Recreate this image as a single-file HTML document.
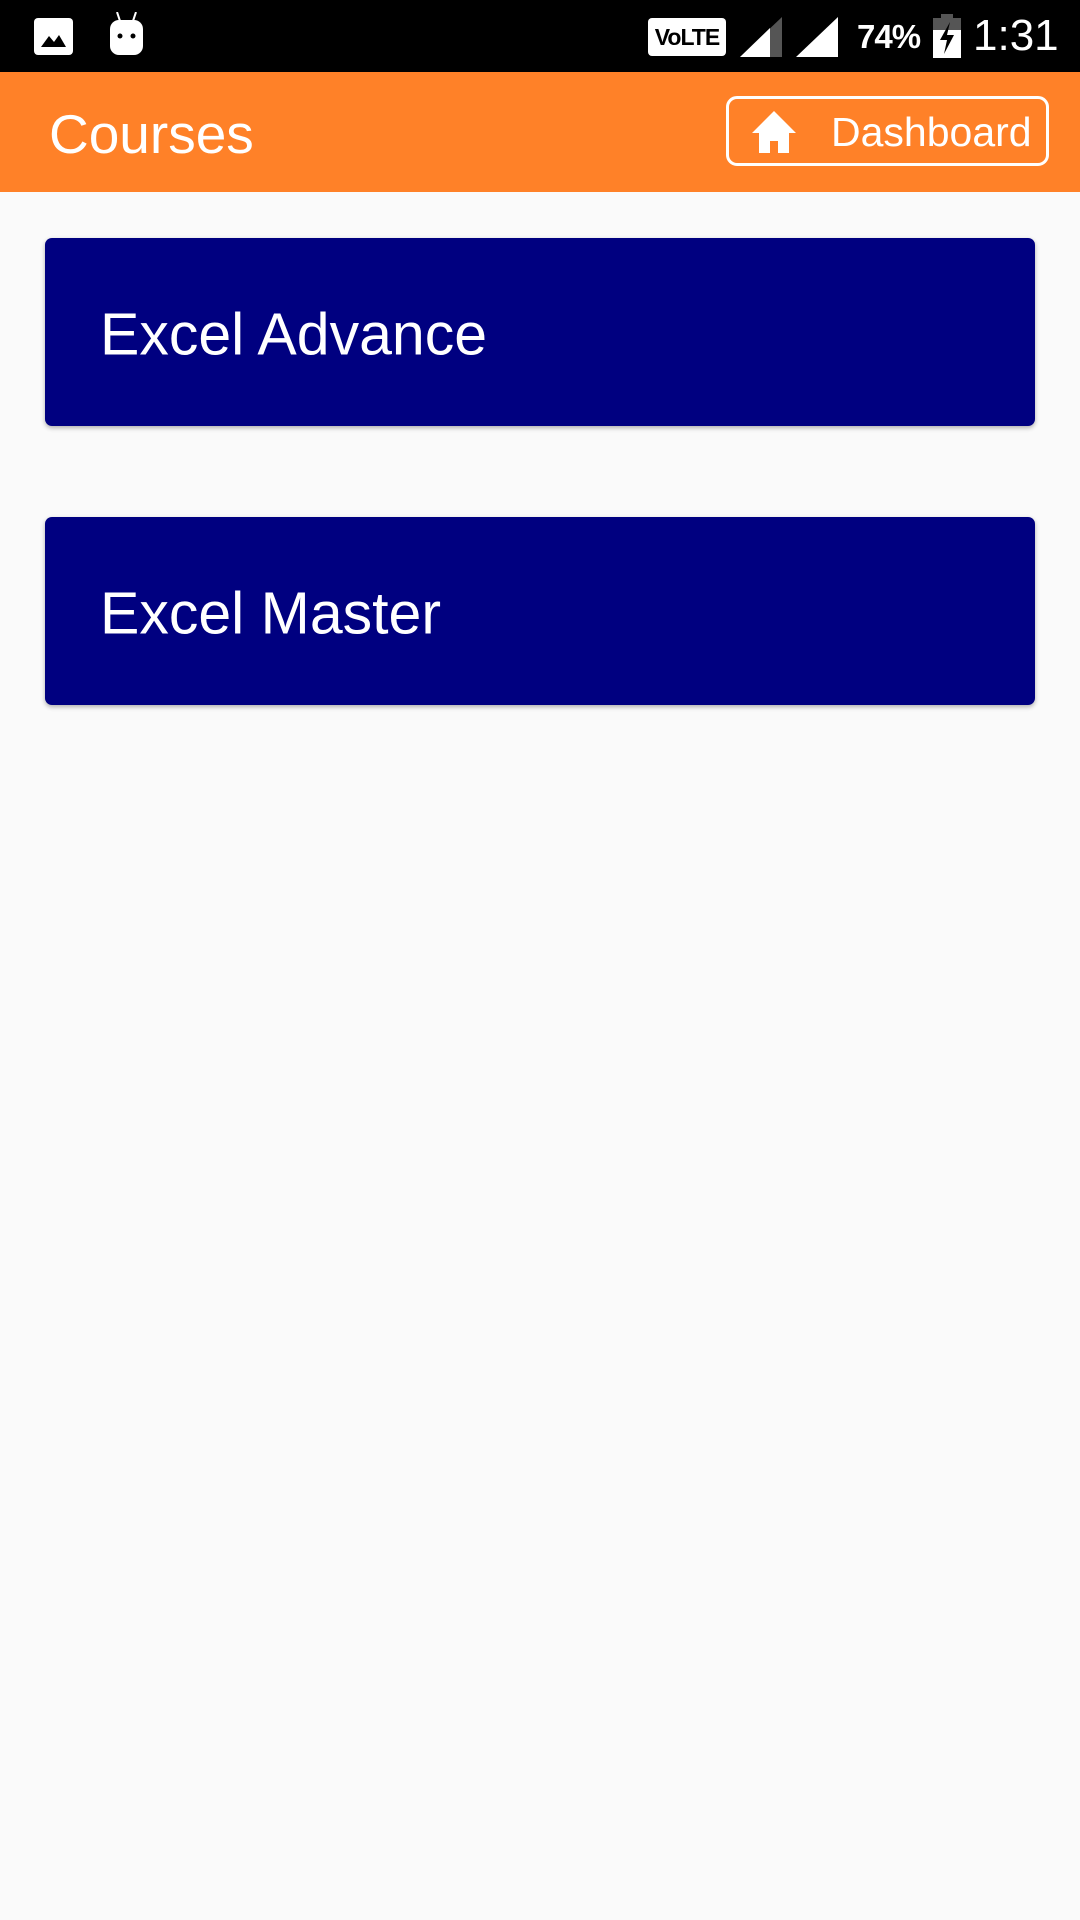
<!DOCTYPE html>
<html><head><meta charset="utf-8"><style>
*{margin:0;padding:0;box-sizing:border-box}
body{width:1080px;height:1920px;background:#fafafa;font-family:"Liberation Sans",Roboto,sans-serif;position:relative;overflow:hidden}
.sb{position:absolute;left:0;top:0;width:1080px;height:72px;background:#000}
.hd{position:absolute;left:0;top:72px;width:1080px;height:120px;background:#ff8128}
.t{position:absolute;color:#fff;white-space:nowrap}
.card{position:absolute;left:45px;width:990px;height:188px;background:#000080;border-radius:7px;box-shadow:0 2px 5px rgba(0,0,0,.3)}
.card span{position:absolute;left:55px;top:50%;transform:translateY(-46%);color:#fff;font-size:59px}
</style></head><body>
<div class="sb">
 <svg style="position:absolute;left:34px;top:18px" width="39" height="37" viewBox="0 0 39 37"><rect x="0" y="0" width="39" height="37" rx="4" fill="#fff"/><path d="M7 29 L15 18 L20 24 L25 17 L32 29Z" fill="#000"/></svg>
 <svg style="position:absolute;left:108px;top:12px" width="37" height="43" viewBox="0 0 37 43"><path d="M9 0 L12 9 M28 0 L25 9" stroke="#fff" stroke-width="2"/><rect x="2" y="8" width="33" height="35" rx="9" fill="#fff"/><circle cx="12" cy="24" r="2.5" fill="#000"/><circle cx="25" cy="24" r="2.5" fill="#000"/></svg>
 <div style="position:absolute;left:648px;top:18px;width:78px;height:38px;background:#fff;border-radius:4px;color:#000;font-weight:bold;font-size:23px;line-height:38px;text-align:center;letter-spacing:-1px">VoLTE</div>
 <svg style="position:absolute;left:740px;top:17px" width="42" height="40" viewBox="0 0 42 40"><path d="M0 40 L42 0 L42 40Z" fill="#555"/><path d="M0 40 L30 11 L30 40Z" fill="#fff"/></svg>
 <svg style="position:absolute;left:796px;top:17px" width="42" height="40" viewBox="0 0 42 40"><path d="M0 40 L42 0 L42 40Z" fill="#fff"/></svg>
 <div class="t" style="left:857px;top:16px;font-size:33px;line-height:42px;font-weight:bold;letter-spacing:-1px">74%</div>
 <svg style="position:absolute;left:933px;top:14px" width="28" height="44" viewBox="0 0 28 44"><rect x="8" y="0" width="12" height="5" fill="#555"/><rect x="0" y="4" width="28" height="40" fill="#555"/><rect x="0" y="16" width="28" height="28" fill="#fff"/><path d="M17 8 L7 26 L14 26 L11 40 L21 21 L14 21Z" fill="#000"/></svg>
 <div class="t" style="left:973px;top:12px;font-size:44px;line-height:48px">1:31</div>
</div>
<div class="hd">
 <div class="t" style="left:49px;top:30px;font-size:55px;line-height:64px">Courses</div>
 <div style="position:absolute;left:726px;top:24px;width:323px;height:70px;border:3px solid #fff;border-radius:11px">
  <svg style="position:absolute;left:20px;top:10px" width="50" height="44" viewBox="0 0 50 44"><path d="M25 2 L3 24 L10 24 L10 44 L21 44 L21 32 L29 32 L29 44 L40 44 L40 24 L47 24Z" fill="#fff"/></svg>
  <div class="t" style="left:102px;top:9px;font-size:41px;line-height:48px">Dashboard</div>
 </div>
</div>
<div class="card" style="top:238px"><span>Excel Advance</span></div>
<div class="card" style="top:517px"><span>Excel Master</span></div>
</body></html>
